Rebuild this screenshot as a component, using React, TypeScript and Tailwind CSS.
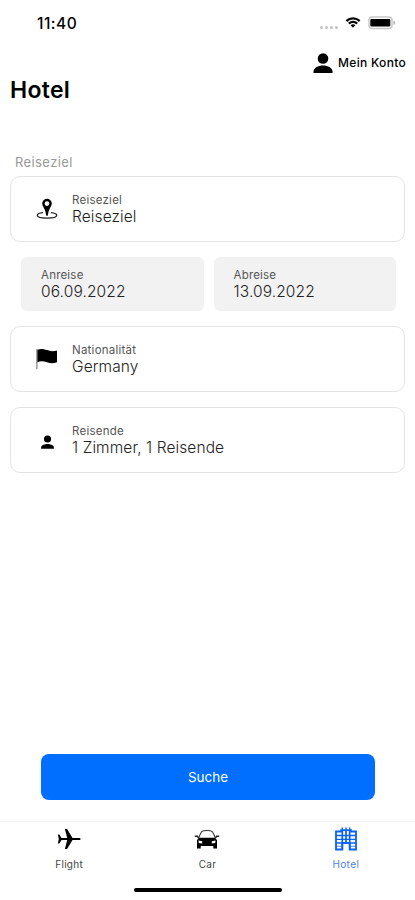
import { ReactNode } from 'react';

function WifiIcon() {
  return (
    <svg viewBox="0 0 16 12" className="h-3 w-4" fill="black">
      <path d="M8 2.4c2.1 0 4.1.8 5.6 2.3.1.1.3.1.4 0l1.2-1.2c.1-.1.1-.3 0-.4A10.3 10.3 0 0 0 .8 3.1c-.1.1-.1.3 0 .4L2 4.7c.1.1.3.1.4 0A8 8 0 0 1 8 2.4Z" />
      <path d="M8 6c1.2 0 2.3.4 3.1 1.2.1.1.3.1.4 0l1.2-1.2c.1-.1.1-.3 0-.4a6.900 6.900 0 0 0-9.400 0c-.1.1-.1.3 0 .4l1.2 1.2c.1.1.3.1.4 0A4.600 4.600 0 0 1 8 6Z" />
      <path d="M10.2 8.500c.1-.1.1-.3 0-.4a3.400 3.400 0 0 0-4.400 0c-.1.1-.1.3 0 .4L7.800 10.600c.1.1.3.1.4 0Z" />
    </svg>
  );
}

function BatteryIcon() {
  return (
    <svg viewBox="0 0 28 14" className="h-3.5 w-7">
      <rect x="1" y="1" width="23" height="11.5" rx="3" fill="#fff" stroke="#c8c8c8" strokeWidth="1.500" />
      <rect x="2.3" y="3" width="20" height="7.600" rx="1" fill="black" />
      <path d="M25.5 4.500v4.500c1-.4 1.600-1.200 1.600-2.200s-.6-1.900-1.600-2.300Z" fill="#aaa" />
    </svg>
  );
}

function UserIcon({ className }: { className: string }) {
  return (
    <svg viewBox="0 0 20 20" className={className} fill="black">
      <circle cx="10" cy="5.5" r="5.300" />
      <path d="M.5 20v-1.500C.9 14.800 5 12.600 10 12.600s9.100 2.200 9.500 5.900V20Z" />
    </svg>
  );
}

function PersonIcon() {
  return (
    <svg viewBox="0 0 24 24" className="mt-1 h-[19px] w-[19px]" fill="black">
      <circle cx="12" cy="7.500" r="4.500" />
      <path d="M12 14c-2.700 0-8 1.300-8 4v2h16v-2c0-2.700-5.300-4-8-4Z" />
    </svg>
  );
}

function PinIcon() {
  return (
    <svg viewBox="0 0 22 22" className="h-[22px] w-[22px]">
      <path d="M7 14.7c-3.300.4-5.700 1.300-5.700 2.500 0 1.700 4 2.900 9.700 2.900s9.700-1.200 9.700-2.900c0-1.200-2.400-2.100-5.700-2.500" fill="none" stroke="#222" strokeWidth="1.300" />
      <path fillRule="evenodd" d="M11 .8a4.800 4.800 0 0 0-4.800 4.800c0 2.400 2.200 4.700 3.100 7.400l1 4.700h1.400l1-4.700c.9-2.700 3.100-5 3.100-7.400A4.800 4.800 0 0 0 11 .8Zm0 2.400a2.400 2.400 0 1 1 0 4.800 2.400 2.400 0 0 1 0-4.800Z" fill="black" />
    </svg>
  );
}

function FlagIcon() {
  return (
    <svg viewBox="0 0 22 22" className="h-[22px] w-[22px]">
      <path d="M.9 1.200v20" stroke="#555" strokeWidth="0.900" />
      <path d="M1.400 1.700c3-1.100 5.500-1.100 9.600.4 3.600 1.300 6.400 1.400 10 .3v11.800c-3.600 1.300-6.500 1.200-10 .1-3.500-1.200-6.500-1.400-9.600-.1Z" fill="black" />
    </svg>
  );
}

function PlaneIcon() {
  return (
    <svg viewBox="0 0 24 22" className="h-[22px] w-6" fill="black">
      <path d="M22 9.900h-6.500L10.100 1H7.900l2.300 8.900H4.500L2.300 6.500H.9L1.800 11l-.9 4.500h1.400l2.200-3.400h5.700L7.900 21h2.200l5.400-8.900H22c1 0 1.600-.5 1.600-1.100S23 9.900 22 9.900Z" />
    </svg>
  );
}

function CarIcon() {
  return (
    <svg viewBox="0 0 26 20" className="h-5 w-[26px]">
      <path d="M4.600 9 6.500 4.600C7.200 2.800 8 2 9.700 1.700c2.200-.3 4.400-.3 6.600 0 1.700.3 2.500 1.100 3.200 2.900L21.400 9" fill="none" stroke="#333" strokeWidth="1.100" />
      <path d="M.8 7.300h2.600l1 1.700M25.200 7.300h-2.600l-1 1.700" fill="none" stroke="#222" strokeWidth="1.400" />
      <path fillRule="evenodd" d="M4.800 8.800h16.400l1.800 2.400v8.300h-3.700V17H6.700v2.500H3v-8.300Zm-.4 2.700.4 2.600 3.400.4v-2.300Zm17.200 0-3.800.7v2.300l3.400-.4Z" fill="black" />
    </svg>
  );
}

function HotelIcon() {
  return (
    <svg viewBox="0 0 22 24" className="h-6 w-[22px]" fill="none" stroke="#0b63f6">
      <path d="M7.300 22.500H1V4.500h5V3.200h10v1.300h5v18h-6.300V16H7.300Z" strokeWidth="1.800" />
      <path d="M7.300 3v19.500M11 3v13M14.700 3v19.500" strokeWidth="1.700" />
      <path d="M1 8.500h20M1 12.300h20M1 16h20" strokeWidth="1.300" />
      <path d="M1 19.300h6M15 19.300h6" strokeWidth="0.700" />
      <path d="M7.300.5v2M11 .5v2M14.700.5v2" strokeWidth="1.500" />
    </svg>
  );
}

type FieldProps = {
  label: string;
  value: string;
  icon: ReactNode;
};

function Field({ label, value, icon }: FieldProps) {
  return (
    <div className="flex h-[66px] items-center rounded-[10px] border border-[#e4e4e4] pl-[25px]">
      <div className="flex w-[22px] justify-center">{icon}</div>
      <div className="ml-[14px]">
        <p className="text-[11.5px] leading-[14px] tracking-[0.24px] text-[#555]">{label}</p>
        <p className="text-[15.5px] leading-[19px] font-light tracking-[0.1px] text-[#222]">{value}</p>
      </div>
    </div>
  );
}

function DateField({ label, value }: { label: string; value: string }) {
  return (
    <div className="flex h-[54px] flex-1 flex-col justify-center rounded-md bg-[#f2f2f2] pl-5">
      <p className="text-[11.5px] leading-[14px] tracking-[0.2px] text-[#555]">{label}</p>
      <p className="text-[15.5px] leading-[19px] font-light tracking-[0.12px] text-[#222]">{value}</p>
    </div>
  );
}

function Tab({ label, icon, active }: { label: string; icon: ReactNode; active?: boolean }) {
  return (
    <div className="flex flex-1 flex-col items-center">
      <div className="flex h-6 items-center">{icon}</div>
      <span
        className={
          active
            ? 'mt-[7px] text-[10px] leading-3 tracking-[0.4px] text-[#4f7ff5]'
            : 'mt-[7px] text-[10px] leading-3 tracking-[0.3px] text-[#444]'
        }
      >
        {label}
      </span>
    </div>
  );
}

export default function App() {
  return (
    <div className="flex h-[900px] w-[415px] flex-col bg-white font-['Inter','Liberation_Sans',sans-serif] text-black">
      <div className="flex h-[46px] items-center justify-between pr-[19px] pl-[37px]">
        <span className="mt-px text-[15.5px] leading-5 font-medium tracking-[0.5px]">11:40</span>
        <div className="flex items-center">
          <div className="mt-2 mr-[7px] flex gap-[2px]">
            {[0, 1, 2, 3].map((i) => (
              <span key={i} className="h-[3px] w-[3px] rounded-full bg-[#c4c4c4]" />
            ))}
          </div>
          <WifiIcon />
          <span className="w-[7px]" />
          <BatteryIcon />
        </div>
      </div>

      <div className="flex h-[33px] items-center justify-end gap-[5px] pr-[9px]">
        <UserIcon className="h-5 w-5" />
        <span className="text-[12px] font-medium tracking-[0.3px]">Mein Konto</span>
      </div>

      <h1 className="-mt-[3px] pl-[10px] text-[23px] leading-7 font-semibold tracking-[0.3px]">Hotel</h1>

      <main className="mt-[50px] px-[10px]">
        <p className="h-[22px] pl-[5px] text-[13px] leading-4 tracking-[0.4px] text-[#999]">Reiseziel</p>
        <Field label="Reiseziel" value="Reiseziel" icon={<PinIcon />} />
        <div className="mt-[15px] flex gap-[10px] pr-[9px] pl-[11px]">
          <DateField label="Anreise" value="06.09.2022" />
          <DateField label="Abreise" value="13.09.2022" />
        </div>
        <div className="mt-[15px] flex flex-col gap-[15px]">
          <Field label="Nationalität" value="Germany" icon={<FlagIcon />} />
          <Field label="Reisende" value="1 Zimmer, 1 Reisende" icon={<PersonIcon />} />
        </div>
      </main>

      <button className="mr-10 ml-[41px] mt-auto h-[46px] shrink-0 rounded-lg bg-[#006fff] text-[13.5px] text-white">
        Suche
      </button>

      <nav className="mt-[21px] flex h-[67px] shrink-0 border-t border-[#f7f7f7] pt-[5px]">
        <Tab label="Flight" icon={<PlaneIcon />} />
        <Tab label="Car" icon={<CarIcon />} />
        <Tab label="Hotel" icon={<HotelIcon />} active />
      </nav>
      <div className="mx-auto mb-2 h-1 w-[148px] shrink-0 rounded-full bg-black" />
    </div>
  );
}
